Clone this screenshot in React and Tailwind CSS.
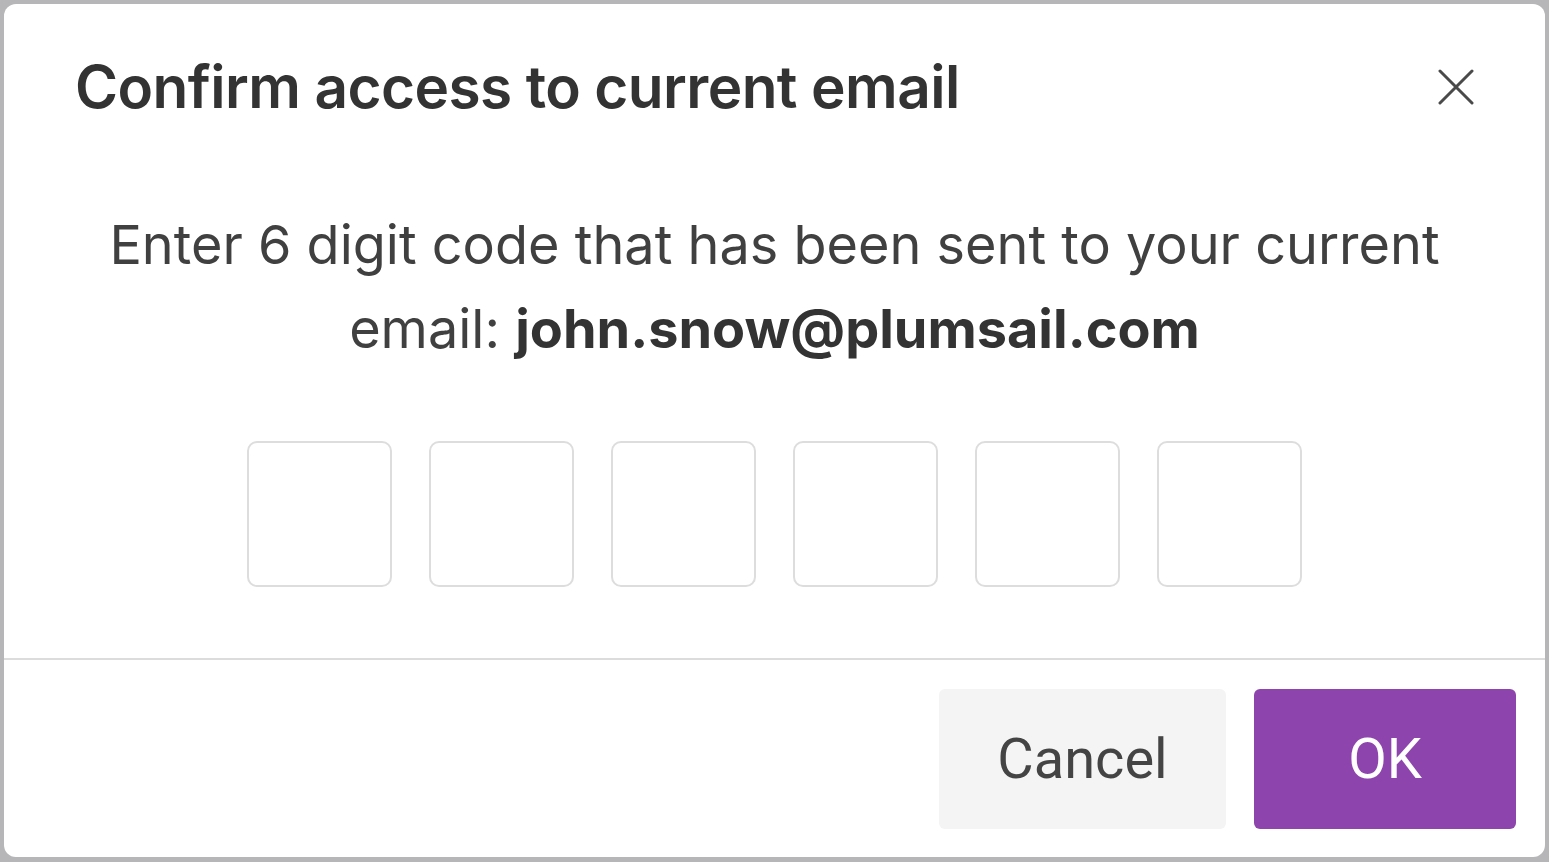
export default function App() {
  const digits = [0, 1, 2, 3, 4, 5]

  return (
    <div className="w-[1549px] h-[862px] bg-[#b6b6b8] pt-[4px] pl-[4px] pr-[4px] pb-[5px] overflow-hidden">
      <div className="w-full h-full bg-white rounded-[12px] flex flex-col overflow-hidden font-['Inter','Noto_Sans',sans-serif]">
        {/* Header */}
        <div className="flex items-start justify-between pl-[71px] pr-[71px] pt-[48px]">
          <h1 className="text-[58.5px] leading-[70px] font-semibold text-[#333333] tracking-[-0.01em]">
            Confirm access to current email
          </h1>
          <button className="mt-[17px] w-[36px] h-[36px] text-[#4a4a4a]" aria-label="Close">
            <svg width="36" height="36" viewBox="0 0 36 36" fill="none">
              <path d="M2 2 L34 34 M34 2 L2 34" stroke="currentColor" strokeWidth="3" strokeLinecap="round" />
            </svg>
          </button>
        </div>

        {/* Body */}
        <p className="mt-[81px] w-[1400px] mx-auto text-center text-[54px] leading-[84px] text-[#404040]">
          Enter 6 digit code that has been sent to your current email:{' '}
          <span className="font-bold text-[#333333]">john.snow@plumsail.com</span>
        </p>

        <div className="mt-[70px] flex justify-center gap-[37px]">
          {digits.map((d) => (
            <input
              key={d}
              type="text"
              maxLength={1}
              className="w-[145px] h-[146px] border-2 border-[#dddddd] rounded-[10px] text-center text-[56px] outline-none"
            />
          ))}
        </div>

        {/* Footer */}
        <div className="mt-[71px] border-t-2 border-[#dcdcdc] flex justify-end gap-[28px] pr-[29px] pt-[29px] pb-[28px] font-['Roboto',sans-serif]">
          <button className="w-[287px] h-[140px] bg-[#f4f4f4] rounded-[6px] text-[56px] text-[#444444]">
            Cancel
          </button>
          <button className="w-[262px] h-[140px] bg-[#8e44ad] rounded-[6px] text-[56px] text-white">
            OK
          </button>
        </div>
      </div>
    </div>
  )
}
